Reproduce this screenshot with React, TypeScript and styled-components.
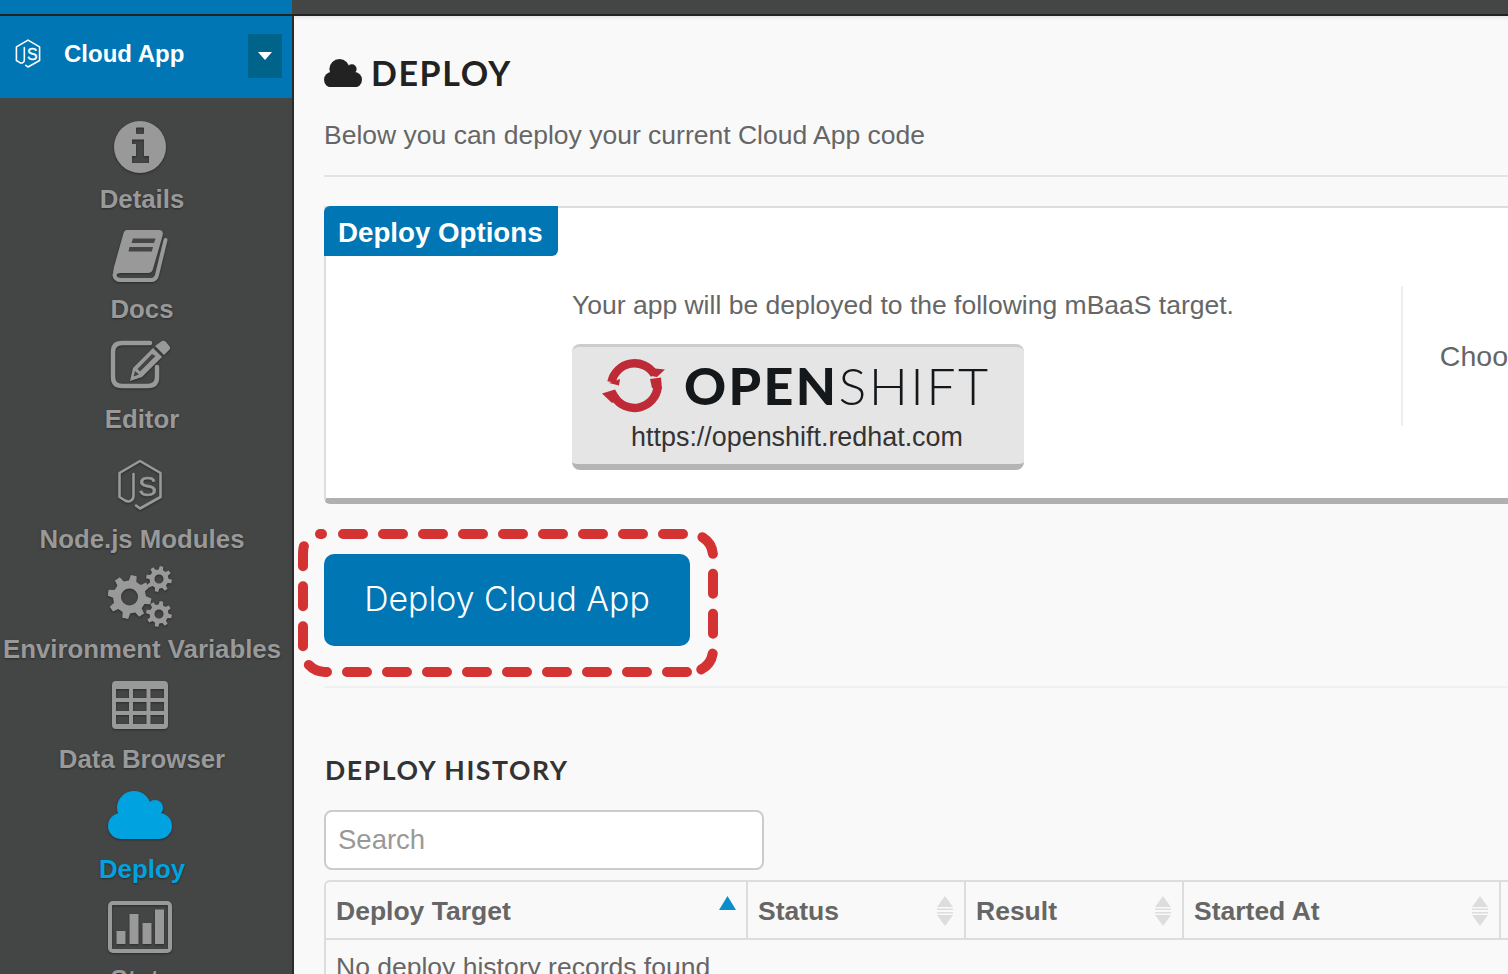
import React from 'react';
import styled, { createGlobalStyle } from 'styled-components';

const blue = '#0076b4';
const sidebarGray = '#444545';
const iconGray = '#999999';

const GlobalStyle = createGlobalStyle`
  * {
    box-sizing: border-box;
  }

  html, body {
    margin: 0;
    padding: 0;
    overflow: hidden;
    font-family: "Liberation Sans", Arial, sans-serif;
  }
`;

const Page = styled.div`
  width: 1508px;
  height: 974px;
  display: flex;
  flex-direction: column;
  overflow: hidden;
  background: #f9f9f9;
`;

const TopBar = styled.div`
  flex: none;
  height: 16px;
  display: flex;
  background: ${sidebarGray};
  border-bottom: 2px solid #222222;
`;

const TopBrand = styled.div`
  width: 292px;
  background: ${blue};
`;

const Body = styled.div`
  flex: 1;
  min-height: 0;
  display: flex;
`;

const Sidebar = styled.aside`
  flex: none;
  width: 294px;
  background: ${sidebarGray};
  border-right: 2px solid #2b2b2b;
  overflow: hidden;
`;

const AppHeader = styled.div`
  height: 82px;
  display: flex;
  align-items: center;
  padding: 0 10px 6px 15px;
  background: ${blue};
  color: #ffffff;
`;

const AppName = styled.div`
  flex: 1;
  margin-left: 23px;
  font-size: 24px;
  font-weight: bold;
`;

const AppMenuButton = styled.div`
  width: 34px;
  height: 44px;
  display: flex;
  align-items: center;
  justify-content: center;
  background: #006389;
  margin-top: 4px;
`;

const Caret = styled.div`
  width: 0;
  height: 0;
  border-left: 7px solid transparent;
  border-right: 7px solid transparent;
  border-top: 8px solid #ffffff;
`;

const Nav = styled.nav`
  padding-top: 8px;
  width: 284px;
`;

const NavItem = styled.div<{ $spaced?: boolean }>`
  height: 110px;
  margin-top: ${(p) => (p.$spaced ? '10px' : '0')};
  color: ${iconGray};
`;

const NavIcon = styled.div<{ $active?: boolean; $lift?: boolean }>`
  height: 81px;
  padding-right: 4px;
  padding-bottom: ${(p) => (p.$lift ? '4px' : '0')};
  display: flex;
  align-items: center;
  justify-content: center;
  color: ${(p) => (p.$active ? '#00a3e0' : iconGray)};

  svg {
    filter: drop-shadow(0 1px 1px #2a2a2a);
  }
`;

const NavLabel = styled.div<{ $active?: boolean }>`
  height: 24px;
  line-height: 24px;
  text-align: center;
  white-space: nowrap;
  font-size: 25.8px;
  font-weight: bold;
  color: ${(p) => (p.$active ? '#00a3e0' : iconGray)};
  text-shadow: 0 1px 2px #2a2a2a;
`;

const Main = styled.main`
  flex: 1;
  min-width: 0;
  overflow: hidden;
  padding: 0 0 0 30px;
  box-shadow: inset 0 4px 4px -3px #dddddd;
`;

const TitleRow = styled.div`
  height: 82px;
  padding-top: 32px;
  display: flex;
  align-items: center;
  gap: 9px;
  color: #222222;
`;

const Title = styled.h1`
  margin: 0;
  font-family: Lato, sans-serif;
  font-weight: 700;
  font-size: 34px;
  line-height: 40px;
  letter-spacing: 1.6px;
`;

const Intro = styled.p`
  margin: 21px 0 0;
  height: 58px;
  padding-bottom: 23px;
  line-height: 33px;
  font-size: 26.5px;
  color: #666666;
  border-bottom: 2px solid #e4e4e4;
  width: 1184px;
`;

const Panel = styled.section`
  margin-top: 29px;
  width: 1184px;
  height: 298px;
  background: #ffffff;
  border-top: 2px solid #dddddd;
  border-left: 2px solid #dddddd;
  border-bottom: 6px solid #b0b0b0;
  border-bottom-left-radius: 6px;
`;

const PanelTab = styled.div`
  width: 234px;
  height: 50px;
  margin: -2px 0 0 -2px;
  padding-left: 14px;
  line-height: 54px;
  background: ${blue};
  color: #ffffff;
  font-size: 27.7px;
  font-weight: bold;
  border-radius: 6px 0 6px 0;
`;

const PanelBody = styled.div`
  display: flex;
  padding-top: 30px;
  height: 170px;
`;

const TargetColumn = styled.div`
  width: 1078px;
  padding-left: 246px;
  height: 140px;
  border-right: 2px solid #eeeeee;
`;

const TargetLead = styled.div`
  font-size: 26.5px;
  line-height: 38px;
  color: #666666;
  white-space: nowrap;
`;

const TargetCard = styled.div`
  width: 452px;
  height: 126px;
  margin-top: 20px;
  padding-top: 7px;
  background: #e5e5e5;
  border-top: 3px solid #cccccc;
  border-bottom: 6px solid #b4b4b4;
  border-radius: 8px;
`;

const LogoRow = styled.div`
  display: flex;
  align-items: center;
  padding-left: 29px;
  height: 61px;
`;

const LogoText = styled.div`
  margin-left: 19px;
  font-family: Lato, sans-serif;
  font-size: 52px;
  line-height: 60px;
  font-weight: 300;
  letter-spacing: 2.4px;
  color: #14181b;

  b {
    font-weight: 900;
  }
`;

const TargetUrl = styled.div`
  margin: 6px 0 0 -2px;
  text-align: center;
  font-size: 26.9px;
  line-height: 32px;
  color: #333333;
`;

const ChooseColumn = styled.div`
  padding: 51px 0 0 37px;
  font-size: 28.5px;
  line-height: 38px;
  color: #666666;
  white-space: nowrap;
`;

const DeployArea = styled.div`
  position: relative;
  width: 366px;
  height: 92px;
  margin-top: 50px;
`;

const DeployButton = styled.button`
  display: block;
  width: 100%;
  height: 100%;
  padding: 0 0 4px;
  border: 0;
  border-radius: 10px;
  background: ${blue};
  color: #ffffff;
  font-family: Inter, sans-serif;
  font-weight: 300;
  font-size: 33.8px;
`;

const Highlight = styled.svg`
  position: absolute;
  left: -30px;
  top: -28px;
  pointer-events: none;
`;

const Rule = styled.hr`
  margin: 40px 0 0;
  width: 1184px;
  height: 2px;
  border: 0;
  background: #f0f0f0;
`;

const SectionTitle = styled.h2`
  margin: 67px 0 0 1px;
  font-family: Lato, sans-serif;
  font-weight: 700;
  font-size: 26.6px;
  line-height: 30px;
  letter-spacing: 1.6px;
  color: #333333;
`;

const SearchInput = styled.input`
  display: block;
  width: 440px;
  height: 60px;
  margin-top: 25px;
  padding: 0 12px;
  border: 2px solid #cccccc;
  border-radius: 8px;
  background: #ffffff;
  font-family: "Liberation Sans", Arial, sans-serif;
  font-size: 27.5px;
  color: #333333;

  &::placeholder {
    color: #999999;
    opacity: 1;
  }
`;

const HistoryTable = styled.table`
  margin-top: 10px;
  width: 1250px;
  table-layout: fixed;
  border-collapse: separate;
  border-spacing: 0;
  border-top: 2px solid #dddddd;
  border-left: 2px solid #dddddd;
  border-top-left-radius: 6px;
`;

const HeadCell = styled.th<{ $width: number }>`
  width: ${(p) => p.$width}px;
  height: 58px;
  padding: 0;
  border-right: 2px solid #dddddd;
  border-bottom: 2px solid #dddddd;
  text-align: left;
`;

const HeadInner = styled.div`
  display: flex;
  align-items: flex-start;
  justify-content: space-between;
  height: 56px;
  padding: 14px 10px 0 10px;
  font-size: 26.5px;
  line-height: 30px;
  font-weight: bold;
  color: #666666;
  white-space: nowrap;
`;

const EmptyCell = styled.td`
  padding: 8px 10px;
  font-size: 26.5px;
  line-height: 38px;
  color: #666666;
  white-space: nowrap;
`;

function NodeIcon({ size, stroke }: { size: number; stroke: number }) {
  return (
    <svg width={size} height={(size * 52) / 46} viewBox="0 0 46 52" fill="none" stroke="currentColor" strokeWidth={stroke} strokeLinejoin="round" strokeLinecap="round">
      <path d="M19 46.500L23 49.500L43.500 38V14L23 2L2.500 14V38L8 41.500C12.500 44 16.500 41 16.500 37V15" />
      <text x="30.500" y="36.500" textAnchor="middle" fontFamily="Liberation Sans, sans-serif" fontSize="28" fill="currentColor" stroke="currentColor" strokeWidth="0.6">S</text>
    </svg>
  );
}

function InfoIcon() {
  return (
    <svg width="52" height="52" viewBox="0 0 52 52" fill="currentColor">
      <path
        fillRule="evenodd"
        d="M26 0a26 26 0 1 1 0 52a26 26 0 1 1 0-52z M23 6.500q-1 0-1 1v4.500q0 1 1 1h6q1 0 1-1v-4.500q0-1-1-1z M18 18.500v4.500h4v12h-4v7h17v-7h-5v-16.500z"
      />
    </svg>
  );
}

function BookIcon() {
  return (
    <svg width="56" height="56" viewBox="0 0 56 56" fill="currentColor">
      <path d="M15 1H47Q52 1 50.500 7L41 40Q40 44 36 44H9Q4 44 3.500 48L1 46Q1 42 2 38L11 6Q12 1 15 1Z" />
      <path d="M53.500 11L45 46Q44 51 39 51H9Q3 51 2.500 46" fill="none" stroke="currentColor" strokeWidth="4" strokeLinecap="round" />
      <path d="M21 9.500H43.500L42 14H19.500Z M17.500 18H41L39.800 22.500H16.500Z" fill={sidebarGray} />
    </svg>
  );
}

function EditIcon() {
  return (
    <svg width="60" height="50" viewBox="0 0 60 50" fill="currentColor">
      <path d="M40 3H12Q3 3 3 12V37Q3 46 12 46H38Q47 46 47 37V27" fill="none" stroke="currentColor" strokeWidth="4.500" strokeLinecap="round" />
      <path d="M45 6L52 1Q54 0 56 2L60 7Q60.500 9 59 10L54 15Z" />
      <path d="M43 8L52 17L32 37L20 41L23 28Z" />
      <path d="M42 14L45.500 16L30 31.500L27.500 29Z M23.500 36.500L25 31L29 34.500Z" fill={sidebarGray} />
    </svg>
  );
}

function gearPath(cx: number, cy: number, outer: number, inner: number, hole: number, teeth: number) {
  const step = (Math.PI * 2) / teeth;
  const point = (r: number, a: number) => `${(cx + r * Math.cos(a)).toFixed(2)} ${(cy + r * Math.sin(a)).toFixed(2)}`;
  let d = '';
  for (let i = 0; i < teeth; i++) {
    const a = i * step + step / 4;
    d += `${i === 0 ? 'M' : 'L'}${point(inner, a - step * 0.3)}L${point(outer, a - step * 0.17)}L${point(outer, a + step * 0.17)}L${point(inner, a + step * 0.3)}`;
  }
  d += `Z M${cx + hole} ${cy}A${hole} ${hole} 0 1 0 ${cx - hole} ${cy}A${hole} ${hole} 0 1 0 ${cx + hole} ${cy}Z`;
  return d;
}

function GearsIcon() {
  return (
    <svg width="64" height="62" viewBox="0 0 64 62" fill="currentColor">
      <path fillRule="evenodd" d={gearPath(21.5, 31, 22, 16.5, 8.5, 8)} />
      <path fillRule="evenodd" d={gearPath(51, 13, 13, 9.5, 4.5, 8)} />
      <path fillRule="evenodd" d={gearPath(51, 48, 13, 9.5, 4.5, 8)} />
    </svg>
  );
}

function TableIcon() {
  return (
    <svg width="56" height="48" viewBox="0 0 56 48" fill="currentColor">
      <path
        fillRule="evenodd"
        d="M4 0H52Q56 0 56 4V44Q56 48 52 48H4Q0 48 0 44V4Q0 0 4 0Z M4 8V17H17V8Z M21 8V17H34.500V8Z M38.500 8V17H52V8Z M4 21V30H17V21Z M21 21V30H34.500V21Z M38.500 21V30H52V21Z M4 34V43H17V34Z M21 34V43H34.500V34Z M38.500 34V43H52V34Z"
      />
    </svg>
  );
}

function CloudIcon({ width }: { width: number }) {
  return (
    <svg width={width} height={(width * 48) / 64} viewBox="0 0 64 48" fill="currentColor">
      <circle cx="13" cy="35" r="13" />
      <circle cx="26" cy="17" r="17" />
      <circle cx="47" cy="17" r="8" />
      <circle cx="51" cy="35" r="13" />
      <rect x="13" y="20" width="38" height="28" />
    </svg>
  );
}

function StatsIcon() {
  return (
    <svg width="64" height="52" viewBox="0 0 64 52" fill="currentColor">
      <rect x="2" y="2" width="60" height="48" rx="3" fill="none" stroke="currentColor" strokeWidth="4" />
      <rect x="8.500" y="30" width="9" height="13" />
      <rect x="21.500" y="13" width="9" height="30" />
      <rect x="34.500" y="22" width="9" height="21" />
      <rect x="47" y="8.500" width="9" height="34.500" />
    </svg>
  );
}

function OpenShiftRing() {
  return (
    <svg width="64" height="62" viewBox="6 6 64 62" fill="#bf2a37">
      <path d="M16.500 34A23.500 23.500 0 0 1 59.500 26.500" fill="none" stroke="#bf2a37" strokeWidth="8.500" />
      <path d="M62.700 39A23.500 23.500 0 0 1 19.500 49" fill="none" stroke="#bf2a37" strokeWidth="8.500" />
      <path d="M55 20L70 21.500L62 29L56 28Z" />
      <path d="M7 45.500L20 41.500L25 50L17 55Z" />
      <path d="M14 35L25 31L24 37.500Z" />
      <path d="M55 31L66 29.500L67 41L57 40Z" />
    </svg>
  );
}

function SortIcon({ active }: { active?: boolean }) {
  if (active) {
    return (
      <svg width="17" height="14" viewBox="0 0 17 14" fill="#0a8ec9">
        <path d="M8.500 0L17 14H0Z" />
      </svg>
    );
  }
  return (
    <svg width="17" height="30" viewBox="0 0 17 30" fill="#dddddd">
      <path d="M8 0L16 11H0Z M0 12.500H16V14H0Z M0 16H16V17.500H0Z M0 19H16L8 30Z" />
    </svg>
  );
}

const navItems = [
  { label: 'Details', icon: <InfoIcon /> },
  { label: 'Docs', icon: <BookIcon /> },
  { label: 'Editor', icon: <EditIcon />, lift: true },
  { label: 'Node.js Modules', icon: <NodeIcon size={46} stroke={2.6} />, spaced: true, lift: true },
  { label: 'Environment Variables', icon: <GearsIcon /> },
  { label: 'Data Browser', icon: <TableIcon />, lift: true },
  { label: 'Deploy', icon: <CloudIcon width={64} />, active: true, lift: true },
  { label: 'Stats', icon: <StatsIcon /> },
];

const columns = [
  { label: 'Deploy Target', width: 422, active: true },
  { label: 'Status', width: 218 },
  { label: 'Result', width: 218 },
  { label: 'Started At', width: 317 },
  { label: '', width: 73, hidden: true },
];

export default function App() {
  return (
    <Page>
      <GlobalStyle />
      <TopBar>
        <TopBrand />
      </TopBar>
      <Body>
        <Sidebar>
          <AppHeader>
            <NodeIcon size={26} stroke={2.8} />
            <AppName>Cloud App</AppName>
            <AppMenuButton>
              <Caret />
            </AppMenuButton>
          </AppHeader>
          <Nav>
            {navItems.map((item) => (
              <NavItem key={item.label} $spaced={item.spaced}>
                <NavIcon $active={item.active} $lift={item.lift}>{item.icon}</NavIcon>
                <NavLabel $active={item.active}>{item.label}</NavLabel>
              </NavItem>
            ))}
          </Nav>
        </Sidebar>
        <Main>
          <TitleRow>
            <CloudIcon width={38} />
            <Title>DEPLOY</Title>
          </TitleRow>
          <Intro>Below you can deploy your current Cloud App code</Intro>
          <Panel>
            <PanelTab>Deploy Options</PanelTab>
            <PanelBody>
              <TargetColumn>
                <TargetLead>Your app will be deployed to the following mBaaS target.</TargetLead>
                <TargetCard>
                  <LogoRow>
                    <OpenShiftRing />
                    <LogoText><b>OPEN</b>SHIFT</LogoText>
                  </LogoRow>
                  <TargetUrl>https://openshift.redhat.com</TargetUrl>
                </TargetCard>
              </TargetColumn>
              <ChooseColumn>Choo</ChooseColumn>
            </PanelBody>
          </Panel>
          <DeployArea>
            <DeployButton>Deploy Cloud App</DeployButton>
            <Highlight width="430" height="152" viewBox="294 526 430 152" fill="none" stroke="#d33333" strokeWidth="10" strokeLinecap="round" strokeDasharray="20 20">
              <path d="M343 534H691A22 22 0 0 1 713 556V650A22 22 0 0 1 700 670" />
              <path d="M687 672H325A22 22 0 0 1 303 650V556Q303 548 304 546" />
              <path d="M320 534H322" strokeDasharray="none" />
            </Highlight>
          </DeployArea>
          <Rule />
          <SectionTitle>DEPLOY HISTORY</SectionTitle>
          <SearchInput placeholder="Search" readOnly />
          <HistoryTable>
            <thead>
              <tr>
                {columns.map((col) => (
                  <HeadCell key={col.width + col.label} $width={col.width}>
                    <HeadInner>
                      {col.label}
                      {!col.hidden && <SortIcon active={col.active} />}
                    </HeadInner>
                  </HeadCell>
                ))}
              </tr>
            </thead>
            <tbody>
              <tr>
                <EmptyCell colSpan={5}>No deploy history records found</EmptyCell>
              </tr>
            </tbody>
          </HistoryTable>
        </Main>
      </Body>
    </Page>
  );
}
